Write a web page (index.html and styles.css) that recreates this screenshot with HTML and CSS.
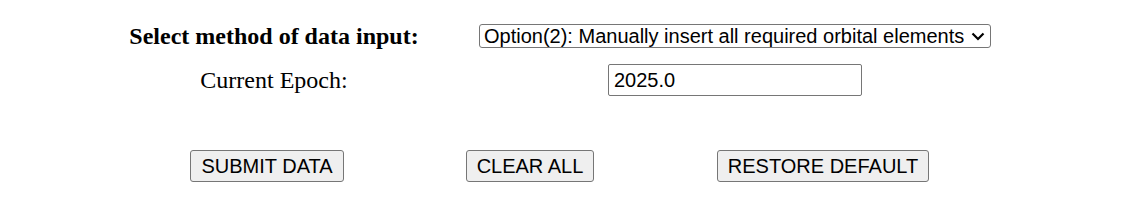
FILE: index.html
```html
<!doctype html>
<html>
<head>
    <meta charset="utf-8"/>
    <title>Orbital elements</title>
    <link rel="stylesheet" href="styles.css">
</head>
<body>

<div class="form">
    <div class="form-row">
        <label class="label label-bold" for="method">Select method of data input:</label>
        <div class="field">
            <span class="select-wrap">
                <select id="method" class="select">
                    <option>Option(1): Load orbital elements from catalogue</option>
                    <option selected>Option(2): Manually insert all required orbital elements</option>
                </select>
                <svg class="chevron" width="14" height="9" viewBox="0 0 14 9"><path d="M1.5 1.5 L7 7 L12.5 1.5" fill="none" stroke="#000" stroke-width="2.2"/></svg>
            </span>
        </div>
    </div>
    <div class="form-row">
        <label class="label" for="epoch">Current Epoch:</label>
        <div class="field"><input type="text" id="epoch" class="input" value="2025.0"></div>
    </div>
</div>

<div class="buttons">
    <div class="btn-cell"><input type="button" class="button" value="SUBMIT DATA"></div>
    <div class="btn-cell"><input type="button" class="button" value="CLEAR ALL"></div>
    <div class="btn-cell"><input type="button" class="button" value="RESTORE DEFAULT"></div>
</div>

</body>
</html>
```

FILE: styles.css
```css
*{margin:0;padding:0;box-sizing:border-box}
body{margin:8px;font-family:"Liberation Serif","Times New Roman",serif;font-size:24px;color:#000;background:#fff}

.form{padding-left:61px;padding-top:6px}
.form-row{display:grid;grid-template-columns:410px 512px;align-items:center;height:44px}
.label{text-align:center}
.label-bold{font-weight:bold}
.field{text-align:center;line-height:0}

.select-wrap{position:relative;display:inline-block}
.select{appearance:none;-webkit-appearance:none;display:block;width:512px;height:24px;font-family:"Liberation Sans",Arial,sans-serif;font-size:20px;line-height:22px;color:#000;border:1px solid #767676;border-radius:3px;background:#fff;padding:0 26px 0 4px}
.chevron{position:absolute;right:6px;top:8px;pointer-events:none}
.input{width:254px;height:32px;font-family:"Liberation Sans",Arial,sans-serif;font-size:20px;color:#000;border:1px solid #767676;border-radius:2px;padding:0 5px}

.buttons{display:grid;grid-template-columns:262px 264px 322px;padding-left:128px;margin-top:48px}
.btn-cell{text-align:center}
.button{height:32px;padding:0 10px;font-family:"Liberation Sans",Arial,sans-serif;font-size:20px;color:#000;background:#efefef;border:1px solid #767676;border-radius:3px}
```
